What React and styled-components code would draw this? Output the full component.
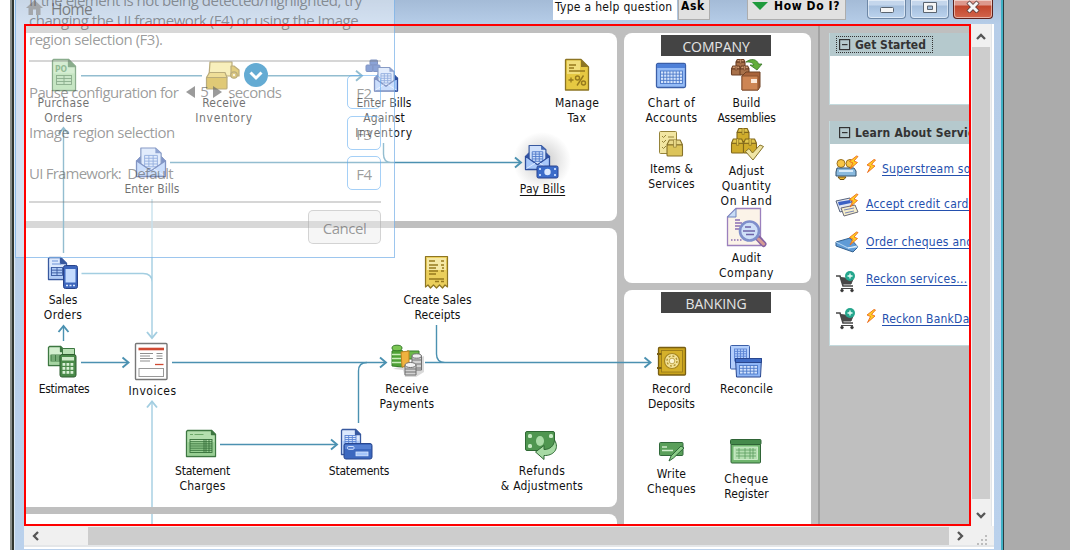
import React from 'react';
import styled, { createGlobalStyle } from 'styled-components';

const Global = createGlobalStyle`
  * { box-sizing: border-box; }
  body { margin: 0; background: #ababab; overflow: hidden; }
`;

const UI = '"DejaVu Sans Condensed", "DejaVu Sans", sans-serif';
const SEGOE = '"Open Sans", "Noto Sans", sans-serif';
const DARK = '#4b91b1';
const LIGHT = '#a3cee1';

/* ---------- window chrome ---------- */

const Desktop = styled.div`
  position: relative;
  display: flex;
  width: 1070px;
  height: 550px;
  overflow: hidden;
  background: #ababab;
  font-family: ${UI};
`;
const Margin = styled.div`
  width: 10px;
  background: #fff;
`;
const Window = styled.div`
  display: flex;
  flex-direction: column;
  width: 994px;
  border-left: 2px solid #8b908c;
  border-right: 1px solid #2b3c42;
  box-shadow: inset 2px 0 #303630, inset 3px 0 #dde9f4, inset -2px 0 #3fb0c4;
  background: linear-gradient(#a4bbd7 0, #b6cde8 24px, #bad1ec 100%);
  padding: 0 9px 0 12px;
`;
const TitleBar = styled.div`
  display: flex;
  align-items: flex-start;
  height: 24px;
  padding-left: 2px;
`;
const Caption = styled.div`
  display: flex;
  gap: 8px;
  width: 527px;
  font: 15.5px/18px ${SEGOE};
  letter-spacing: -0.7px;
  color: #20262c;
`;
const HelpField = styled.div`
  width: 124px;
  height: 20px;
  padding: 0 0 0 2px;
  background: #fff;
  font-size: 12px;
  line-height: 14px;
  letter-spacing: 0.3px;
  white-space: nowrap;
  color: #111;
`;
const PushButton = styled.div`
  display: flex;
  gap: 6px;
  width: ${p => p.$w}px;
  height: 20px;
  margin-left: ${p => p.$ml}px;
  padding-left: ${p => p.$pl}px;
  background: #e1e1e1;
  border: solid #adadad;
  border-width: 0 1px 1px;
  font-size: 12px;
  font-weight: bold;
  line-height: 13px;
  letter-spacing: 0.6px;
  white-space: nowrap;
  color: #000;
`;
const CaptionButtons = styled.div`
  display: flex;
  gap: 4px;
  margin-left: 21px;
`;
const CaptionButton = styled.div`
  display: flex;
  justify-content: center;
  width: ${p => p.$w || 39}px;
  height: 19px;
  border: 1px solid ${p => (p.$close ? '#5e211d' : '#6d87a6')};
  border-top: 0;
  border-radius: 0 0 4px 4px;
  box-shadow: inset 0 0 0 1px rgba(255, 255, 255, 0.5);
  background: ${p => p.$close
    ? 'linear-gradient(#dd988d 0 5px, #c2452c 6px, #d2654c)'
    : 'linear-gradient(#c4d6ec 0 5px, #a5bfdd 6px, #bcd3ee)'};
`;
const Body = styled.div`
  display: flex;
  height: 502px;
`;
const VBar = styled.div`
  display: flex;
  flex-direction: column;
  align-items: center;
  width: 23px;
  padding: 8px 4px 0 0;
  background: linear-gradient(90deg, #f0f0f0 0 20px, #e2e5e8 20px 21px, #fff 21px);
`;
const VThumb = styled.div`
  flex: none;
  width: 18px;
  height: 452px;
  margin: 5px 0 11px;
  background: #cdcdcd;
`;
const HBar = styled.div`
  display: flex;
  align-items: center;
  height: 23px;
  padding: 1px 0 4px;
  background: linear-gradient(#f0f0f0 0 19px, #e4e6e8 19px 21px, #fff 21px);
`;
const HThumb = styled.div`
  width: 861px;
  height: 18px;
  background: #cdcdcd;
`;
const ArrowSlot = styled.div`
  display: flex;
  justify-content: center;
  width: ${p => p.$w}px;
  padding-right: ${p => p.$pr || 0}px;
`;

/* ---------- home page ---------- */

const Home = styled.div`
  position: relative;
  display: flex;
  width: 947px;
  height: 502px;
  overflow: hidden;
  border: 2px solid transparent;
  background: #bfbfbf;
`;
const Flow = styled.div`
  display: flex;
  flex-direction: column;
  gap: 7px;
  width: 591px;
  padding-top: 7px;
`;
const Panel = styled.div`
  flex: none;
  height: ${p => p.$h}px;
  background: #fff;
  border-radius: 0 8px 8px 0;
`;
const SideColumn = styled(Flow)`
  width: 187px;
  margin-left: 7px;
`;
const Card = styled(Panel)`
  padding: 2px 0 0 10px;
  border-radius: 8px;
`;
const CardTitle = styled.div`
  width: 110px;
  height: 21px;
  margin: 0 0 ${p => p.$mb}px 27px;
  background: #444;
  color: #e4e4e4;
  font: 14px/23px ${SEGOE};
  letter-spacing: -0.1px;
  text-align: center;
`;
const Columns = styled.div`
  display: flex;
`;
const Column = styled.div`
  width: 75px;
`;
const Tile = styled.div`
  display: flex;
  flex-direction: column;
  align-items: center;
  width: 75px;
  height: ${p => p.$h}px;
`;
const Node = styled(Tile)`
  position: absolute;
  left: ${p => p.$x - 26 - 50}px;
  top: ${p => p.$base - 50 - 26}px;
  width: 100px;
  height: auto;
`;
const IconSlot = styled.svg`
  flex: none;
  width: 36px;
  height: 36px;
  margin-bottom: 3px;
  overflow: visible;
`;
const Label = styled.div`
  font-size: 12px;
  line-height: 15px;
  letter-spacing: ${p => p.$ls || 0}px;
  text-align: center;
  white-space: nowrap;
  color: #111;
  ${p => p.$underline && 'text-decoration: underline; text-underline-offset: 2px;'}
`;
const Connectors = styled.svg`
  position: absolute;
  left: 0;
  top: 0;
`;

/* ---------- right-hand pane ---------- */

const Pane = styled.div`
  display: flex;
  flex-direction: column;
  flex: none;
  gap: 16px;
  width: 151px;
  margin-left: 7px;
  padding: 7px 0 0 9px;
  border-left: 2px solid #a2a2a2;
`;
const Section = styled.div`
  height: ${p => p.$h}px;
  border: solid #c4dadd;
  border-width: 0 0 1px 1px;
  background: #fff;
  white-space: nowrap;
`;
const SectionHead = styled.div`
  display: flex;
  align-items: center;
  height: 23px;
  padding-left: 7px;
  background: #b5c9cd;
`;
const HeadText = styled.div`
  display: flex;
  align-items: center;
  gap: 4px;
  height: 15px;
  padding: 0 6px 0 2px;
  outline: ${p => (p.$focus ? '1px dotted #333' : 'none')};
  font-size: 12px;
  font-weight: bold;
  letter-spacing: ${p => p.$ls || 0}px;
  color: #333;
`;
const Links = styled.div`
  padding-top: 6px;
`;
const LinkRow = styled.div`
  display: flex;
  align-items: center;
  gap: 7px;
  height: 37.5px;
  padding-left: 5px;
  svg { flex: none; }
`;
const BoltMark = styled.svg`
  width: 10px;
  height: 15px;
  margin: 0 -1px 5px 0;
`;
const Link = styled.span`
  position: relative;
  top: ${p => p.$dy || 0}px;
  font-size: 12px;
  letter-spacing: 0.25px;
  color: #2450ae;
  text-decoration: underline;
  text-underline-offset: 2px;
`;

/* ---------- capture dialog ---------- */

const Dialog = styled.div`
  position: absolute;
  left: 15px;
  top: -20px;
  width: 380px;
  height: 278px;
  padding: 10px 13px 0;
  border: 1px solid rgba(91, 160, 226, 0.6);
  background: rgba(255, 255, 255, 0.4);
  font: 15px/19.5px ${SEGOE};
  color: rgba(72, 72, 72, 0.55);
`;
const Hint = styled.div`
  height: 71px;
  border-bottom: 2px solid rgba(120, 120, 120, 0.3);
  white-space: pre;
  letter-spacing: -0.48px;
`;
const Options = styled.div`
  display: flex;
  flex-direction: column;
  gap: 6px;
  height: 141px;
  padding-top: 13px;
  border-bottom: 2px solid rgba(120, 120, 120, 0.3);
`;
const Option = styled.div`
  display: flex;
  align-items: center;
  justify-content: space-between;
  height: 34.5px;
  letter-spacing: ${p => p.$ls || -0.55}px;
  white-space: pre;
`;
const Key = styled.div`
  width: 34px;
  height: 34px;
  border: 1px solid rgba(91, 170, 240, 0.55);
  border-radius: 5px;
  line-height: 34px;
  letter-spacing: -0.3px;
  text-align: center;
`;
const Cancel = styled.div`
  width: 73px;
  height: 34px;
  margin: 7px 0 0 auto;
  border: 1px solid rgba(130, 130, 130, 0.3);
  border-radius: 5px;
  background: rgba(225, 225, 225, 0.3);
  line-height: 34px;
  letter-spacing: -0.5px;
  text-align: center;
`;
const Spin = styled.span`
  display: inline-flex;
  align-items: center;
  gap: 5px;
  margin: 0 6px 0 8px;
`;
const Toggle = styled.svg`
  position: absolute;
  left: 244px;
  top: 63px;
`;
/* Marks the captured region; stays above the dialog. */
const CaptureFrame = styled.div`
  position: absolute;
  left: 24px;
  top: 24px;
  width: 947px;
  height: 502px;
  border: 2px solid #fe0000;
  pointer-events: none;
`;

/* ---------- icons ---------- */

const BLUE = ['#dce9fd', '#8db4f3', '#38599f'];
const GREEN = ['#d3efcf', '#7fbf7c', '#3d7741'];

const Doc = ({ x, y, w, h, c, f = 6 }) => (
  <g stroke={c[2]} strokeWidth="1.3" strokeLinejoin="round">
    <path d={`M${x + 1} ${y}H${x + w - f}L${x + w} ${y + f}V${y + h}H${x}V${y + 1}Z`} fill={c[0]} />
    <path d={`M${x + 1} ${y + h * 0.45}H${x + w - 1}V${y + h - 1}H${x + 1}Z`} fill={c[1]} opacity=".55" stroke="none" />
    <path d={`M${x + w - f} ${y}V${y + f}H${x + w}Z`} fill={c[2]} />
  </g>
);
const Grid = ({ x, y, w, h, cols, rows, color, fill = 'none' }) => (
  <g stroke={color} strokeWidth=".9" fill={fill}>
    <rect x={x} y={y} width={w} height={h} />
    {Array.from({ length: cols - 1 }, (_, i) => <path key={`c${i}`} d={`M${x + (w * (i + 1)) / cols} ${y}v${h}`} />)}
    {Array.from({ length: rows - 1 }, (_, i) => <path key={`r${i}`} d={`M${x} ${y + (h * (i + 1)) / rows}h${w}`} />)}
  </g>
);
const Envelope = ({ x, y, w, h }) => (
  <g strokeLinejoin="round">
    <path d={`M${x} ${y + h * 0.45}L${x + w * 0.14} ${y + h * 0.3}H${x + w * 0.86}L${x + w} ${y + h * 0.45}V${y + h}H${x}Z`} fill="#2f51a6" stroke="#2f4f9d" />
    <path d={`M${x + w * 0.15} ${y}h${w * 0.5}l${w * 0.2} ${w * 0.18}V${y + h * 0.8}H${x + w * 0.15}Z`} fill="#cfe0fb" stroke="#38599f" strokeWidth="1.2" />
    <path d={`M${x + w * 0.65} ${y}v${w * 0.18}h${w * 0.2}Z`} fill="#4568b4" />
    <Grid x={x + w * 0.28} y={y + h * 0.26} w={w * 0.44} h={h * 0.4} cols={3} rows={4} color="#4d78c9" />
    <path d={`M${x} ${y + h * 0.45}L${x + w / 2} ${y + h * 0.8}L${x + w} ${y + h * 0.45}V${y + h}H${x}Z`} fill="#a9c8fa" stroke="#2f4f9d" strokeWidth="1.3" />
    <path d={`M${x + 1} ${y + h - 1}L${x + w * 0.4} ${y + h * 0.74}M${x + w - 1} ${y + h - 1}L${x + w * 0.6} ${y + h * 0.74}`} stroke="#dce9ff" fill="none" />
  </g>
);
const Crate = ({ x, y, w, h, fill, top, line }) => (
  <g stroke={line} strokeWidth="1.1" strokeLinejoin="round">
    <rect x={x} y={y + h * 0.3} width={w} height={h * 0.7} rx="1" fill={fill} />
    <path d={`M${x} ${y + h * 0.3}L${x + w * 0.15} ${y}H${x + w * 0.85}L${x + w} ${y + h * 0.3}Z`} fill={top} />
    <path d={`M${x + w * 0.42} ${y}v${h * 0.45}h${w * 0.18}v${-h * 0.45}`} fill={top} strokeWidth=".6" />
  </g>
);

const icons = {
  po: (
    <g>
      <Doc x={6.5} y={2.5} w={23} h={31} c={['#b9e2b4', '#8cca88', '#3d7741']} f={7} />
      <text x="9" y="15" fontSize="8.5" fontWeight="bold" fontFamily={UI} fill="#4a8d4e">PO</text>
      <Grid x={10.5} y={18.5} w={15} h={9} cols={2} rows={3} color="#3d7741" fill="#a7d6a3" />
    </g>
  ),
  receive: (
    <g stroke="#8d7523" strokeWidth="1.2" strokeLinejoin="round">
      <path d="M4 5H26V19H3Z" fill="#f4e590" />
      <path d="M25 9h3l5 4v6h-8z" fill="#d0ae2c" />
      <circle cx="28" cy="18" r="3.2" fill="#c7a735" />
      <circle cx="28" cy="18" r="1" fill="#fff" stroke="none" />
      <rect x=".5" y="20" width="20.5" height="12" rx="1" fill="#cba51c" />
      <path d="M.5 20.5L3.5 15.5H19L21 20.5Z" fill="#e4c955" />
    </g>
  ),
  billsAgainst: (
    <g>
      <g fill="#3f66bb" stroke="#2f4f9d"><rect x="5" y="3" width="7.5" height="5" rx="1" /><rect x="1" y="8" width="7" height="6.5" rx="1" /><rect x="8" y="8" width="7" height="6.5" rx="1" /></g>
      <Envelope x={9.5} y={10.5} w={23} h={23.5} />
    </g>
  ),
  bills: <Envelope x={2.5} y={5} w={29} h={28.5} />,
  pay: (
    <g>
      <Envelope x={1.5} y={2.5} w={24} h={24} />
      <rect x="13" y="23" width="21" height="12" rx="1.5" fill="#3c6cc9" stroke="#28438f" />
      <circle cx="23.5" cy="29" r="3.2" fill="#dbe9ff" />
      <path d="M15 25h2v2h-2zM15 31h2v2h-2zM30 25h2v2h-2zM30 31h2v2h-2z" fill="#bdd3fa" />
    </g>
  ),
  tax: (
    <g>
      <path d="M7 2.5H22L29.5 10V33H6.5V3Z" fill="#e6c842" stroke="#8d7523" strokeWidth="1.3" strokeLinejoin="round" />
      <path d="M8 3.5H21V17H8Z" fill="#f5e795" opacity=".7" />
      <path d="M22 2.5V10H29.5Z" fill="#8d7523" />
      <path d="M10 8h7M10 11h5M10 14h16M9.5 23h5M12 20.5v5" stroke="#96791d" strokeWidth="1.3" fill="none" />
      <g fill="none" stroke="#96791d" strokeWidth="1.4"><circle cx="18.5" cy="21" r="2" /><circle cx="24.5" cy="26" r="2" /><path d="M24.5 18.5L18 28.5" /></g>
    </g>
  ),
  sales: (
    <g>
      <Doc x={3.5} y={3.5} w={18} h={22} c={BLUE} />
      <path d="M7 7h6M7 10h9" stroke="#6d93d8" />
      <Grid x={6.5} y={13.5} w={11} h={8} cols={2} rows={3} color="#38599f" />
      <rect x="18.5" y="11.5" width="14" height="23" rx="2" fill="#3d66bd" stroke="#29448b" />
      <rect x="20.5" y="15" width="10" height="13.5" fill="#c4dbfe" />
      <path d="M21 31.5h2M24.5 31.5h2M28 31.5h2" stroke="#dce9ff" strokeWidth="1.5" />
    </g>
  ),
  estimates: (
    <g>
      <Doc x={3.5} y={3.5} w={17} h={19} c={GREEN} f={5} />
      <Grid x={6} y={12} w={9} h={6} cols={2} rows={3} color="#3d7741" />
      <path d="M17.5 12V5.5H29.5V12" fill="#b8e0b4" stroke="#3d7741" />
      <rect x="15" y="11.5" width="16" height="22.5" rx="2" fill="#4a8a49" stroke="#2f5e30" />
      <rect x="17" y="14" width="12" height="3.5" fill="#cdeac8" />
      <g fill="#d9f0d5">{[20, 24, 28].map(y => [17.5, 21.5, 25.5].map(x => <rect key={`${x}-${y}`} x={x} y={y} width="2.8" height="2.8" />))}</g>
    </g>
  ),
  invoice: (
    <g>
      <rect x="1.5" y="-1.5" width="31.5" height="36" rx="1" fill="#fff" stroke="#777" strokeWidth="1.4" />
      <path d="M4.5 4H30" stroke="#cf4a33" strokeWidth="2.6" />
      <path d="M6 8.5h13M6 11h10M6 13.5h13M6 16h10M22.5 8.5h6M22.5 11h6M22.5 13.5h6" stroke="#8f8f8f" strokeWidth="1.1" />
      <path d="M21 19.5h8.5" stroke="#cf4a33" strokeWidth="1.3" />
      <rect x="5" y="23.5" width="24.5" height="8" fill="#fff" stroke="#999" />
    </g>
  ),
  receipt: (
    <g>
      <path d="M6.5 2.5H28.5V33l-2.5-2-2.5 3-3-3-3 3-3-3-3 3-2.5-3-2.5 2Z" fill="#ebcf5c" stroke="#8d7523" strokeWidth="1.2" strokeLinejoin="round" />
      <path d="M8 4H27V16H8Z" fill="#faf2c4" opacity=".7" />
      <path d="M10 7h6M22 7h3M10 11h9M22 11h3M10 14h7M23 14h2M10 17h9M22 17h3M10 20h7M10 25h15M16 27.5h4M22 27.5h3" stroke="#96791d" strokeWidth="1.3" />
    </g>
  ),
  payments: (
    <g>
      <path d="M4 26L14 27L16 34H27L35 29V13" fill="#000" opacity=".15" />
      <path d="M3 8L7 6L14 8V24L3 23Z" fill="#4fa237" stroke="#367c2a" />
      <path d="M3 11.5h10M3 15.5h10M3 19.5h10" stroke="#cbedbb" strokeWidth="1.6" />
      <ellipse cx="8" cy="5" rx="5" ry="2.8" fill="#7cc754" stroke="#367c2a" />
      <path d="M18 8h12v8H18z" fill="#6ab749" stroke="#367c2a" />
      <path d="M12 9l8-1v15l-7 1z" fill="#efb23f" stroke="#bd8220" />
      <g fill="#d2d2d2" stroke="#707070">
        <path d="M23 13v14h9.5V13z" /><path d="M23 17h9.5M23 21h9.5M23 25h9.5" /><ellipse cx="27.7" cy="13" rx="4.7" ry="2.2" fill="#f0f0f0" />
        <path d="M16 22v10h11V22z" /><path d="M16 26h11M16 29h11" /><ellipse cx="21.5" cy="22" rx="5.5" ry="2.5" fill="#f2f2f2" />
      </g>
    </g>
  ),
  charges: (
    <g>
      <Doc x={1.5} y={5.5} w={29} h={26} c={['#b4e0ae', '#7fbf7c', '#3d7741']} f={4} />
      <path d="M5 9.5h3M9.5 9.5h9" stroke="#6ba868" />
      <Grid x={5} y={14.5} w={22} h={13} cols={1} rows={6} color="#35703a" />
      <path d="M19 14.5v13M21 14.5v13M24 14.5v13" stroke="#35703a" strokeWidth=".9" />
    </g>
  ),
  statements: (
    <g>
      <Doc x={0.5} y={4.5} w={19} h={25} c={BLUE} f={5} />
      <Grid x={4} y={10.5} w={11} h={10} cols={3} rows={5} color="#5b84d4" />
      <rect x="3" y="18.5" width="28" height="15.5" rx="2" fill="#3c68bf" stroke="#29478f" />
      <path d="M4 20h26v4H4z" fill="#5580d2" />
      <rect x="6.5" y="21.5" width="6.5" height="2.8" rx="1" fill="none" stroke="#cfe0fd" />
      <rect x="15" y="27" width="12" height="3.8" fill="#a4c5fa" stroke="#dce9ff" strokeWidth=".8" />
    </g>
  ),
  refunds: (
    <g>
      <rect x="1.5" y="6.5" width="29" height="19" rx="1.5" fill="#4f9650" stroke="#2f6934" />
      <ellipse cx="16" cy="16" rx="4" ry="5" fill="#a9dba6" />
      <g fill="#c8eac5"><rect x="4" y="9" width="4" height="4" rx="1.5" /><rect x="4" y="19" width="4" height="4" rx="1.5" /><rect x="25" y="9" width="4" height="4" rx="1.5" /></g>
      <path d="M30.5 15C36 24 29 31 20 30.5V34.5L11.5 27L20 20.5V24.5C26 24.5 30 21 30.5 15Z" fill="#a7daa4" stroke="#2f6934" strokeLinejoin="round" />
    </g>
  ),
  chart: (
    <g>
      <rect x="2.5" y="6.5" width="29" height="24" rx="1.5" fill="#94bbf6" stroke="#3b5fa8" strokeWidth="1.3" />
      <rect x="3" y="7" width="28" height="4" fill="#4e80d8" />
      <Grid x={6.5} y={14} w={22} h={12.5} cols={7} rows={4} color="#4b78c8" fill="#d6e5fc" />
    </g>
  ),
  build: (
    <g>
      <Crate x={7} y={2.5} w={9} h={8} fill="#a8714a" top="#d19c74" line="#6b3f24" />
      <Crate x={2.5} y={9} w={9} h={9} fill="#a8714a" top="#d19c74" line="#6b3f24" />
      <Crate x={11} y={9} w={9} h={9} fill="#a8714a" top="#d19c74" line="#6b3f24" />
      <path d="M17 5C22 1 28 2 29.5 7H33L28 13L21 8H25C23 5 21 5 17 5Z" fill="#62ad3b" stroke="#37752a" strokeWidth=".8" />
      <path d="M13 19L17 15H31V30L29 33H13Z" fill="#a8633a" stroke="#6f4123" strokeLinejoin="round" />
      <path d="M13 19h16v14H13z" fill="#cd8554" stroke="#8a522e" /><rect x="22" y="22" width="6" height="4" fill="#fbe9db" />
    </g>
  ),
  items: (
    <g>
      <rect x="5.5" y="8.5" width="17" height="22" rx="1" fill="#f2e6a2" stroke="#96843a" />
      <path d="M8 13l1.5 1.5L12 12M8 18l1.5 1.5L12 17M8 24l1.5 1.5L12 23M14 14h6" stroke="#96843a" fill="none" />
      <Crate x={13} y={17} w={15.5} h={16} fill="#dcc45a" top="#e9d98a" line="#87722a" />
    </g>
  ),
  adjust: (
    <g>
      <Crate x={8} y={3.5} w={12} h={13} fill="#cfac2b" top="#e2c74d" line="#80671a" />
      <Crate x={2.5} y={14} w={12} h={14} fill="#cfac2b" top="#e2c74d" line="#80671a" />
      <Crate x={14.5} y={14} w={13} h={14} fill="#cfac2b" top="#e2c74d" line="#80671a" />
      <path d="M16.5 26.5l3.5-3 3.5 4.5L31 20l3.5 1.5L24 35Z" fill="#f0e5a5" stroke="#857227" strokeLinejoin="round" />
    </g>
  ),
  audit: (
    <g>
      <path d="M7-3.5H31.5V33.5H-1.5V5Z" fill="#fbf3e8" stroke="#9b80bd" strokeWidth="1.3" />
      <path d="M7-3.5V5H-1.5Z" fill="#c9dcf6" stroke="#6c83bd" />
      <path d="M6 8h5M6 11h7M6 14h5M6 17h5M2 28h1.5M5 28h1.5M8 28h1.5M11 28h1.5" stroke="#8b6db3" strokeWidth="1.3" />
      <path d="M28.5 25.5L34.5 32" stroke="#8662a2" strokeWidth="6" strokeLinecap="round" />
      <path d="M29.5 27L34.5 32" stroke="#d59a94" strokeWidth="3" strokeLinecap="round" />
      <circle cx="20.5" cy="19" r="9.5" fill="#cfe0f8" stroke="#7f8fcb" strokeWidth="2.6" />
      <path d="M16 15h6M14 19h12M17 22.5h8" stroke="#6e63a8" strokeWidth="1.6" />
    </g>
  ),
  safe: (
    <g>
      <rect x="4.5" y="4.5" width="27" height="27.5" rx="1" fill="#c9a31c" stroke="#785e12" strokeWidth="1.3" />
      <rect x="7.5" y="7.5" width="21" height="21.5" fill="#d5b02a" stroke="#93761a" strokeWidth=".8" />
      <path d="M3 11h4.5M3 25h4.5" stroke="#785e12" strokeWidth="2" />
      <circle cx="18" cy="18" r="7.5" fill="#f3e39a" stroke="#a58522" strokeWidth="1.2" />
      <circle cx="18" cy="18" r="5" fill="none" stroke="#b2932e" strokeWidth="1.4" strokeDasharray="2 1.9" />
      <circle cx="18" cy="18" r="2.8" fill="#fbf5d4" stroke="#a98922" strokeWidth=".7" />
    </g>
  ),
  reconcile: (
    <g>
      <rect x="1.5" y="2.5" width="19" height="23.5" rx="1" fill="#b4cffb" stroke="#3b5fa8" />
      <Grid x={5.5} y={6} w={12} h={12} cols={4} rows={5} color="#5b84d4" />
      <path d="M6.5 15.5H32.5L31.5 34H7.5Z" fill="#8fb6f6" stroke="#29478f" strokeLinejoin="round" />
      <path d="M6.5 15.5h26v4h-26z" fill="#3f6cc6" stroke="#29478f" />
      <Grid x={10.5} y={22.5} w={18} h={8.5} cols={5} rows={3} color="#4b78c8" fill="#d3e3fd" />
    </g>
  ),
  write: (
    <g>
      <rect x="5.5" y="14.5" width="23.5" height="13" rx="1" fill="#5a9f5a" stroke="#30683a" />
      <path d="M8 19h5M8 22.5h11" stroke="#cfedcc" strokeWidth="1.6" />
      <path d="M27 18l3 2-10.5 10-4.500 3 2-5Z" fill="#8ccc88" stroke="#30683a" strokeLinejoin="round" />
    </g>
  ),
  register: (
    <g>
      <rect x="2" y="11" width="29.5" height="19" rx="1" fill="#6fb56d" stroke="#2f6436" />
      <rect x="1.5" y="6.5" width="30.5" height="5" rx="1" fill="#458a4b" stroke="#2f6436" />
      <rect x="5" y="14" width="23.5" height="12.5" fill="#b5dfb1" stroke="#d7f2d4" strokeWidth=".8" />
      <path d="M7 17h20M7 20h20M7 23h20M10 15v11M16 15v11M21 15v11M24 15v11" stroke="#5a9d5d" strokeWidth=".8" />
    </g>
  ),
};

/* Letter spacing per label line, so each keeps the width of the hinted UI font. */
const TRACKING = {
  Purchase: 0.35, Orders: 0.35, Receive: 0.2, Inventory: 0.65, 'Enter Bills': 0.05, Against: 0.15, Manage: 0.2, Tax: 0.4,
  Estimates: -0.3, Invoices: 0.5, Statement: -0.2, Statements: -0.2, Charges: 0.25, Refunds: 0.4, '& Adjustments': 0.22,
  Payments: 0.25, Record: 0.3, Reconcile: 0.15, Write: 0.2, Cheques: 0.3, Cheque: 0.5, 'Chart of': 0.5, Accounts: 0.35,
  Build: 0.2, Assemblies: -0.3, 'Items &': 0.15, Services: 0.1, Adjust: 0.3, Quantity: 0.35, 'On Hand': 0.7, Audit: 0.2,
  Company: 0.5, 'Pay Bills': 0.1,
};

const Item = ({ icon, dx = 0, underline, lines }) => (
  <>
    <IconSlot viewBox="0 0 36 36"><g transform={`translate(${dx} 0)`}>{icons[icon]}</g></IconSlot>
    {lines.map(line => <Label key={line} $ls={TRACKING[line]} $underline={underline}>{line}</Label>)}
  </>
);

const nodes = [
  { icon: 'po', x: 63.5, base: 107, lines: ['Purchase', 'Orders'] },
  { icon: 'receive', x: 224, base: 107, lines: ['Receive', 'Inventory'] },
  { icon: 'billsAgainst', x: 384, base: 107, lines: ['Enter Bills', 'Against', 'Inventory'], dx: -1 },
  { icon: 'tax', x: 577, base: 107, lines: ['Manage', 'Tax'] },
  { icon: 'bills', x: 152, base: 193, lines: ['Enter Bills'] },
  { icon: 'pay', x: 542.5, base: 193, lines: ['Pay Bills'], underline: true, dx: -1 },
  { icon: 'sales', x: 63, base: 304, lines: ['Sales', 'Orders'] },
  { icon: 'estimates', x: 64, base: 393, lines: ['Estimates'], dx: -1 },
  { icon: 'invoice', x: 152.5, base: 395, lines: ['Invoices'], dx: -1 },
  { icon: 'receipt', x: 437.5, base: 304, lines: ['Create Sales', 'Receipts'], dx: -1 },
  { icon: 'payments', x: 407, base: 393, lines: ['Receive', 'Payments'] },
  { icon: 'charges', x: 202.5, base: 475, lines: ['Statement', 'Charges'] },
  { icon: 'statements', x: 359, base: 475, lines: ['Statements'] },
  { icon: 'refunds', x: 542, base: 475, lines: ['Refunds', '& Adjustments'] },
];

const Heads = ({ points }) => points.map(([x, y, d]) => {
  const shapes = {
    r: `M${x - 6} ${y - 5}L${x} ${y}L${x - 6} ${y + 5}`,
    u: `M${x - 5} ${y + 6}L${x} ${y}L${x + 5} ${y + 6}`,
    d: `M${x - 5} ${y - 6}L${x} ${y}L${x + 5} ${y - 6}`,
  };
  return <path key={`${x},${y}`} d={shapes[d]} strokeWidth="1.9" />;
});

const Wires = () => (
  <Connectors width="943" height="498" viewBox="26 26 943 498" fill="none">
    <g stroke={DARK} strokeWidth="1.4">
      <path d="M81 75.8H202M268 75.8H361M63.5 253V129M170 162.5H520M383.5 143V154Q383.5 162.5 391 162.5" />
      <path d="M63.5 341V327M81 362.5H128M172 362.5H385M425 362.5H650M436.5 325V354Q436.5 362.5 445 362.5" />
      <path d="M220 444.5H336M358.5 423V371Q358.5 362.5 367 362.5" />
      <Heads points={[[362, 75.8, 'r'], [63.5, 128, 'u'], [521, 162.5, 'r'], [63.5, 326, 'u'], [128.5, 362.5, 'r'], [386, 362.5, 'r'], [650.5, 362.5, 'r'], [337, 444.5, 'r']]} />
    </g>
    <g stroke={LIGHT} strokeWidth="1.4">
      <path d="M152 199V337M81.5 273.5H143Q152 273.5 152 282M152 402V507M152 514V524" />
      <Heads points={[[152, 338, 'd'], [152, 401.5, 'u']]} />
    </g>
  </Connectors>
);

const Bolt = ({ x = 0, y = 0 }) => (
  <path transform={`translate(${x} ${y})`} d="M7.5 0L0.5 5.5L4 7L1 13L8.5 6.5L5 5L9 0.5Z" fill="#ffcf21" stroke="#ec6a1d" strokeWidth=".9" />
);

const linkArt = {
  people: (
    <g>
      <circle cx="6" cy="6.5" r="4" fill="#f7c545" stroke="#99701e" /><circle cx="15" cy="6.5" r="4" fill="#f7c545" stroke="#99701e" />
      <path d="M2 11h17l2 3v5H1v-4z" fill="#89b9de" stroke="#31506c" /><path d="M4 14h14" stroke="#d9ecfb" strokeWidth="2" /><path d="M3 20h8l-2 2.5H5z" fill="#f4b92e" stroke="#6d5113" />
      <Bolt x={14} y={-1} />
    </g>
  ),
  cards: (
    <g>
      <path d="M1 6l14-3 4 10-14 4z" fill="#e4e9f2" stroke="#56627c" /><path d="M3 7l12-2 1 3-12 2.5z" fill="#3c62c4" />
      <path d="M6 13l14-3 3 7-14 4z" fill="#f5edc9" stroke="#6a6a78" /><path d="M9 15l10-2M10 18l9-2" stroke="#7a86b8" />
      <Bolt x={14} y={-1} />
    </g>
  ),
  cheques: (
    <g>
      <path d="M1 10l14-4 8 9-5 5L1 14z" fill="#5f9bd6" stroke="#34618f" /><path d="M1 10l12 6 10-1" fill="none" stroke="#b9d9f3" /><path d="M13 16l9-2" stroke="#e7f2fb" />
      <Bolt x={14} y={0} />
    </g>
  ),
  cart: (
    <g fill="none" stroke="#474747">
      <path d="M1 6h4l3 10h10" strokeWidth="1.6" /><path d="M5.5 7.5L18 9l-2 5H8z" fill="#484848" /><path d="M6 18.5h12" />
      <circle cx="7" cy="20.5" r="1.3" fill="#333" /><circle cx="17" cy="20.5" r="1.3" fill="#333" />
      <circle cx="15" cy="6" r="5" fill="#25a68d" stroke="none" /><path d="M12.5 6h5M15 3.5v5" stroke="#e9fff9" strokeWidth="1.3" />
    </g>
  ),
};
const links = [
  { art: 'people', bolt: true, text: 'Superstream solutions' },
  { art: 'cards', text: 'Accept credit cards', dy: -2 },
  { art: 'cheques', text: 'Order cheques and forms', dy: -2 },
  { art: 'cart', text: 'Reckon services...', dy: -2 },
  { art: 'cart', bolt: true, text: 'Reckon BankData' },
];

const Collapse = () => (
  <svg width="12" height="12" viewBox="0 0 12 12" fill="none" stroke="#333" strokeWidth="1.2">
    <rect x=".6" y=".6" width="10" height="10" /><path d="M3 5.6h5.5" />
  </svg>
);
const Chevron = ({ d }) => (
  <svg width="10" height="10" viewBox="0 0 10 10" fill="none" stroke="#555" strokeWidth="2.3"><path d={d} /></svg>
);

export default function App() {
  return (
    <Desktop>
      <Global />
      <Margin />
      <Window>
        <TitleBar>
          <Caption>
            <svg width="17" height="16" viewBox="0 0 17 16"><path d="M0 8L8.5 0L17 8H14.5V15H10V9.5H7V15H2.5V8Z" fill="#676c72" /></svg>
            Home
          </Caption>
          <HelpField>Type a help question</HelpField>
          <PushButton $w={32} $ml={1} $pl={2}>Ask</PushButton>
          <PushButton $w={99} $ml={37} $pl={4}>
            <svg width="16" height="10" viewBox="0 0 16 10"><path d="M0 2H16L8 10Z" fill="#1f9a3c" /></svg>
            How Do I?
          </PushButton>
          <CaptionButtons>
            <CaptionButton>
              <svg width="14" height="13" viewBox="0 0 14 13"><rect x=".5" y="7.5" width="13" height="5" rx="1" fill="#f5f5f5" stroke="#5a6470" /></svg>
            </CaptionButton>
            <CaptionButton>
              <svg width="14" height="13" viewBox="0 0 14 13"><path d="M.5 2.5h13v10H.5zM4.5 6v3.5h5V6z" fillRule="evenodd" fill="#f5f5f5" stroke="#5a6470" /></svg>
            </CaptionButton>
            <CaptionButton $close $w={40}>
              <svg width="14" height="13" viewBox="0 0 14 13"><path d="M2 2L12 12M12 2L2 12" stroke="#5a3c3c" strokeWidth="4.5" /><path d="M2.5 2.5L11.5 11.5M11.5 2.5L2.5 11.5" stroke="#f5f5f5" strokeWidth="3" /></svg>
            </CaptionButton>
          </CaptionButtons>
        </TitleBar>

        <Body>
          <Home>
            <Flow>
              <Panel $h={188} />
              <Panel $h={279} />
              <Panel $h={40} />
            </Flow>
            <Connectors width="943" height="498" viewBox="26 26 943 498">
              <defs><radialGradient id="halo"><stop offset=".3" stopColor="#d8d8d8" /><stop offset="1" stopColor="#fff" /></radialGradient></defs>
              <circle cx="542" cy="161" r="29" fill="url(#halo)" />
            </Connectors>
            {nodes.map(n => (
              <Node key={n.icon} $x={n.x} $base={n.base}>
                <Item icon={n.icon} dx={n.dx} underline={n.underline} lines={n.lines} />
              </Node>
            ))}

            <SideColumn>
              <Card $h={250}>
                <CardTitle $mb={1}>COMPANY</CardTitle>
                <Columns>
                  <Column>
                    <Tile $h={66}><Item icon="chart" lines={['Chart of', 'Accounts']} /></Tile>
                    <Tile><Item icon="items" lines={['Items &', 'Services']} /></Tile>
                  </Column>
                  <Column>
                    <Tile $h={68}><Item icon="build" lines={['Build', 'Assemblies']} /></Tile>
                    <Tile $h={87}><Item icon="adjust" lines={['Adjust', 'Quantity', 'On Hand']} /></Tile>
                    <Tile><Item icon="audit" lines={['Audit', 'Company']} /></Tile>
                  </Column>
                </Columns>
              </Card>
              <Card $h={260}>
                <CardTitle $mb={30}>BANKING</CardTitle>
                <Columns>
                  <Column>
                    <Tile $h={85}><Item icon="safe" lines={['Record', 'Deposits']} /></Tile>
                    <Tile><Item icon="write" lines={['Write', 'Cheques']} /></Tile>
                  </Column>
                  <Column>
                    <Tile $h={90}><Item icon="reconcile" lines={['Reconcile']} /></Tile>
                    <Tile><Item icon="register" lines={['Cheque', 'Register']} /></Tile>
                  </Column>
                </Columns>
              </Card>
            </SideColumn>

            <Pane>
              <Section $h={72}>
                <SectionHead><HeadText $focus><Collapse />Get Started</HeadText></SectionHead>
              </Section>
              <Section $h={225}>
                <SectionHead><HeadText $ls={0.2}><Collapse />Learn About Services</HeadText></SectionHead>
                <Links>
                  {links.map(l => (
                    <LinkRow key={l.text}>
                      <svg width="24" height="23" viewBox="0 0 24 23" overflow="visible">{linkArt[l.art]}</svg>
                      {l.bolt && <BoltMark viewBox="-.5 -.5 10 15"><Bolt /></BoltMark>}
                      <Link $dy={l.dy}>{l.text}</Link>
                    </LinkRow>
                  ))}
                </Links>
              </Section>
            </Pane>
            <Wires />
          </Home>
          <VBar>
            <Chevron d="M1 7L5 3L9 7" />
            <VThumb />
            <Chevron d="M1 3L5 7L9 3" />
          </VBar>
        </Body>
        <HBar>
          <ArrowSlot $w={64} $pr={41}><Chevron d="M7 1L3 5L7 9" /></ArrowSlot>
          <HThumb />
          <ArrowSlot $w={22}><Chevron d="M3 1L7 5L3 9" /></ArrowSlot>
          <svg width="20" height="18" viewBox="0 0 20 18"><path d="M14 8h2v2h-2zM10 12h2v2h-2zM14 12h2v2h-2zM6 16h2v2H6zM10 16h2v2h-2zM14 16h2v2h-2z" fill="#bdbdbd" /></svg>
        </HBar>
      </Window>

      <Dialog>
        <Hint>{'If the element is not being detected/highlighted, try\nchanging the UI framework (F4) or using the Image\nregion selection (F3).'}</Hint>
        <Options>
          <Option $ls={-0.62}>
            <span>
              Pause configuration for
              <Spin>
                <svg width="9" height="12" viewBox="0 0 9 12"><path d="M9 0V12L0 6Z" fill="#666" opacity=".65" /></svg>
                5
                <svg width="9" height="12" viewBox="0 0 9 12"><path d="M0 0V12L9 6Z" fill="#666" opacity=".65" /></svg>
              </Spin>
              seconds
            </span>
            <Key>F2</Key>
          </Option>
          <Option>Image region selection<Key>F3</Key></Option>
          <Option $ls={-0.78}>UI Framework:  Default<Key>F4</Key></Option>
        </Options>
        <Cancel>Cancel</Cancel>
      </Dialog>
      <CaptureFrame />
      <Toggle width="24" height="24" viewBox="0 0 24 24">
        <circle cx="12" cy="12" r="12" fill="#64abd3" />
        <path d="M6.5 9.5L12 15L17.5 9.5" fill="none" stroke="#fff" strokeWidth="3" />
      </Toggle>
    </Desktop>
  );
}
